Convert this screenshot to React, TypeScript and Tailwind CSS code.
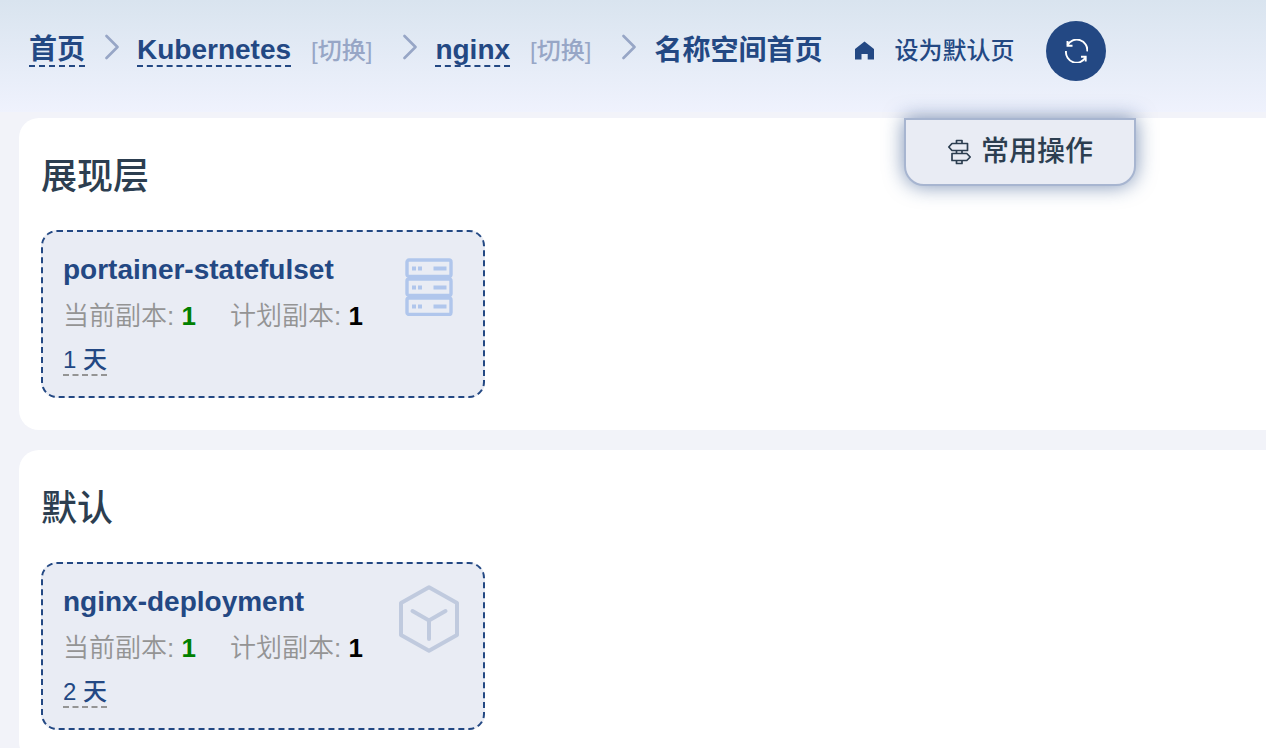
import React from "react";

type TWorkload = {
  name: string;
  current: number;
  planned: number;
  age: string;
  icon: React.ReactNode;
};

type TLayer = {
  title: string;
  workloads: TWorkload[];
};

function ServerIcon() {
  return (
    <svg width="48" height="58" viewBox="0 0 48 58" fill="none" stroke="#b0c6ec" aria-hidden="true">
      {[0, 19, 38].map((y) => (
        <g key={y}>
          <rect x="2" y={y + 2} width="44" height="16.5" rx="2" strokeWidth="3.4" />
          <path d={`M7 ${y + 10.5}h4M13 ${y + 10.5}h4M28.5 ${y + 10.5}h13`} strokeWidth="4.2" />
        </g>
      ))}
    </svg>
  );
}

function CubeIcon() {
  return (
    <svg width="60" height="70" viewBox="0 0 60 70" fill="none" stroke="#c0cade" strokeWidth="4" aria-hidden="true">
      <path d="M30 3.3 58 19v32L30 66.700 2 51V19z" strokeLinejoin="round" />
      <path d="M13.500 27 30 36.500 46.500 27M30 36.500V55" strokeLinecap="round" />
    </svg>
  );
}

function Chevron() {
  return (
    <svg className="mr-[18px] ml-5 shrink-0 -translate-y-1" width="14" height="26" viewBox="0 0 14 26" fill="none" aria-hidden="true">
      <path d="M1.500 2 12.500 13 1.500 24" stroke="#97a6c6" strokeWidth="2.600" strokeLinecap="round" strokeLinejoin="round" />
    </svg>
  );
}

function HomeIcon() {
  return (
    <svg width="20" height="20" viewBox="0 0 20 20" fill="#234883" aria-hidden="true">
      <path d="M10.500 .5 20 8v10.500h-6.300V13H7.500v5.500H1V8z" />
    </svg>
  );
}

function RefreshIcon() {
  return (
    <svg width="24" height="24" viewBox="0 0 24 24" fill="none" stroke="#fff" strokeWidth="1.900" aria-hidden="true">
      <path d="M23.200 12.500A10.500 10.500 0 0 0 3.500 6.200M2 12A10.500 10.500 0 0 0 21.500 18.500" />
      <path d="M3.500 2v4.700h5M17 17.800h4.700v4.700" />
    </svg>
  );
}

function GuideIcon() {
  return (
    <svg width="24" height="26" viewBox="0 0 24 26" fill="none" stroke="#2c3e50" strokeWidth="1.700" strokeLinejoin="round" aria-hidden="true">
      <path d="M5 4.500H20.500v7H5L1.800 8z" />
      <path d="M19.800 14.500H5v7h14.800L23.200 18z" />
      <path d="M9.500 4.500V1.500h5.500v3M9.500 11.500v3M15 11.500v3M9.500 21.500v3H15v-3" />
    </svg>
  );
}

const layers: TLayer[] = [
  {
    title: "展现层",
    workloads: [{ name: "portainer-statefulset", current: 1, planned: 1, age: "1 天", icon: <ServerIcon /> }],
  },
  {
    title: "默认",
    workloads: [{ name: "nginx-deployment", current: 1, planned: 1, age: "2 天", icon: <CubeIcon /> }],
  },
];

function Crumb({ label, switchable = false }: { label: string; switchable?: boolean }) {
  return (
    <>
      <a href="#" className="border-b-2 border-dashed border-[#234883] text-[28px] leading-[30px] font-bold text-[#234883]">
        {label}
      </a>
      {switchable && (
        <button type="button" className="mr-[11px] ml-5 text-2xl leading-8 font-medium text-[#97a6c6]">
          [切换]
        </button>
      )}
      <Chevron />
    </>
  );
}

function WorkloadCard({ name, current, planned, age, icon }: TWorkload) {
  return (
    <article className="flex w-[444px] justify-between rounded-2xl border-2 border-dashed border-[#234883] bg-[#e9ecf4] py-5 pr-6 pl-5">
      <div>
        <h3 className="text-[28px] leading-9">
          <a href="#" className="font-bold text-[#234883]">
            {name}
          </a>
        </h3>
        <p className="mt-2 flex gap-[34px] text-[26px] leading-10 font-[350] text-[#949494]">
          <span>
            当前副本: <b className="font-bold text-[#008000]">{current}</b>
          </span>
          <span>
            计划副本: <b className="font-bold text-black">{planned}</b>
          </span>
        </p>
        <span className="mt-2.5 inline-block border-b-2 border-dashed border-[#949494] text-2xl leading-7 font-medium text-[#234883]">
          {age}
        </span>
      </div>
      <div className="flex h-[70px] w-[60px] items-center justify-center">{icon}</div>
    </article>
  );
}

export default function App() {
  return (
    <div className="relative h-screen overflow-hidden bg-[#f2f3f9] font-['Liberation_Sans','Noto_Sans_CJK_SC',sans-serif] text-[#2c3e50]">
      <header className="h-28 bg-linear-to-b from-[#d9e4ef] to-[#eff2fd] pt-5 pl-[29px]">
        <nav className="flex h-[62px] items-center whitespace-nowrap">
          <Crumb label="首页" />
          <Crumb label="Kubernetes" switchable />
          <Crumb label="nginx" switchable />
          <h1 className="text-[28px] leading-8 font-bold text-[#234883]">名称空间首页</h1>
          <button type="button" className="ml-8 flex items-center gap-5 text-2xl leading-8 font-medium text-[#234883]">
            <HomeIcon />
            设为默认页
          </button>
          <button type="button" aria-label="刷新" className="ml-8 flex size-[60px] items-center justify-center rounded-full bg-[#234883]">
            <RefreshIcon />
          </button>
        </nav>
      </header>

      {/* Action drawer hanging under the header */}
      <button
        type="button"
        className="absolute top-[118px] right-[130px] flex h-[68px] w-[232px] items-center justify-center gap-2.5 rounded-b-[20px] border-2 border-[#a7b5d0] bg-[#e9ecf4] text-[28px] leading-9 font-medium shadow-[0_0_20px_rgba(35,72,131,0.6)]"
      >
        <GuideIcon />
        常用操作
      </button>

      <main className="mt-1.5 space-y-5 pl-[19px]">
        {layers.map((layer) => (
          <section key={layer.title} className="rounded-l-[20px] bg-white px-[22px] pt-[33px] pb-8">
            <h2 className="mb-[27px] text-4xl leading-[52px] font-medium">{layer.title}</h2>
            {layer.workloads.map((workload) => (
              <WorkloadCard key={workload.name} {...workload} />
            ))}
          </section>
        ))}
      </main>
    </div>
  );
}
